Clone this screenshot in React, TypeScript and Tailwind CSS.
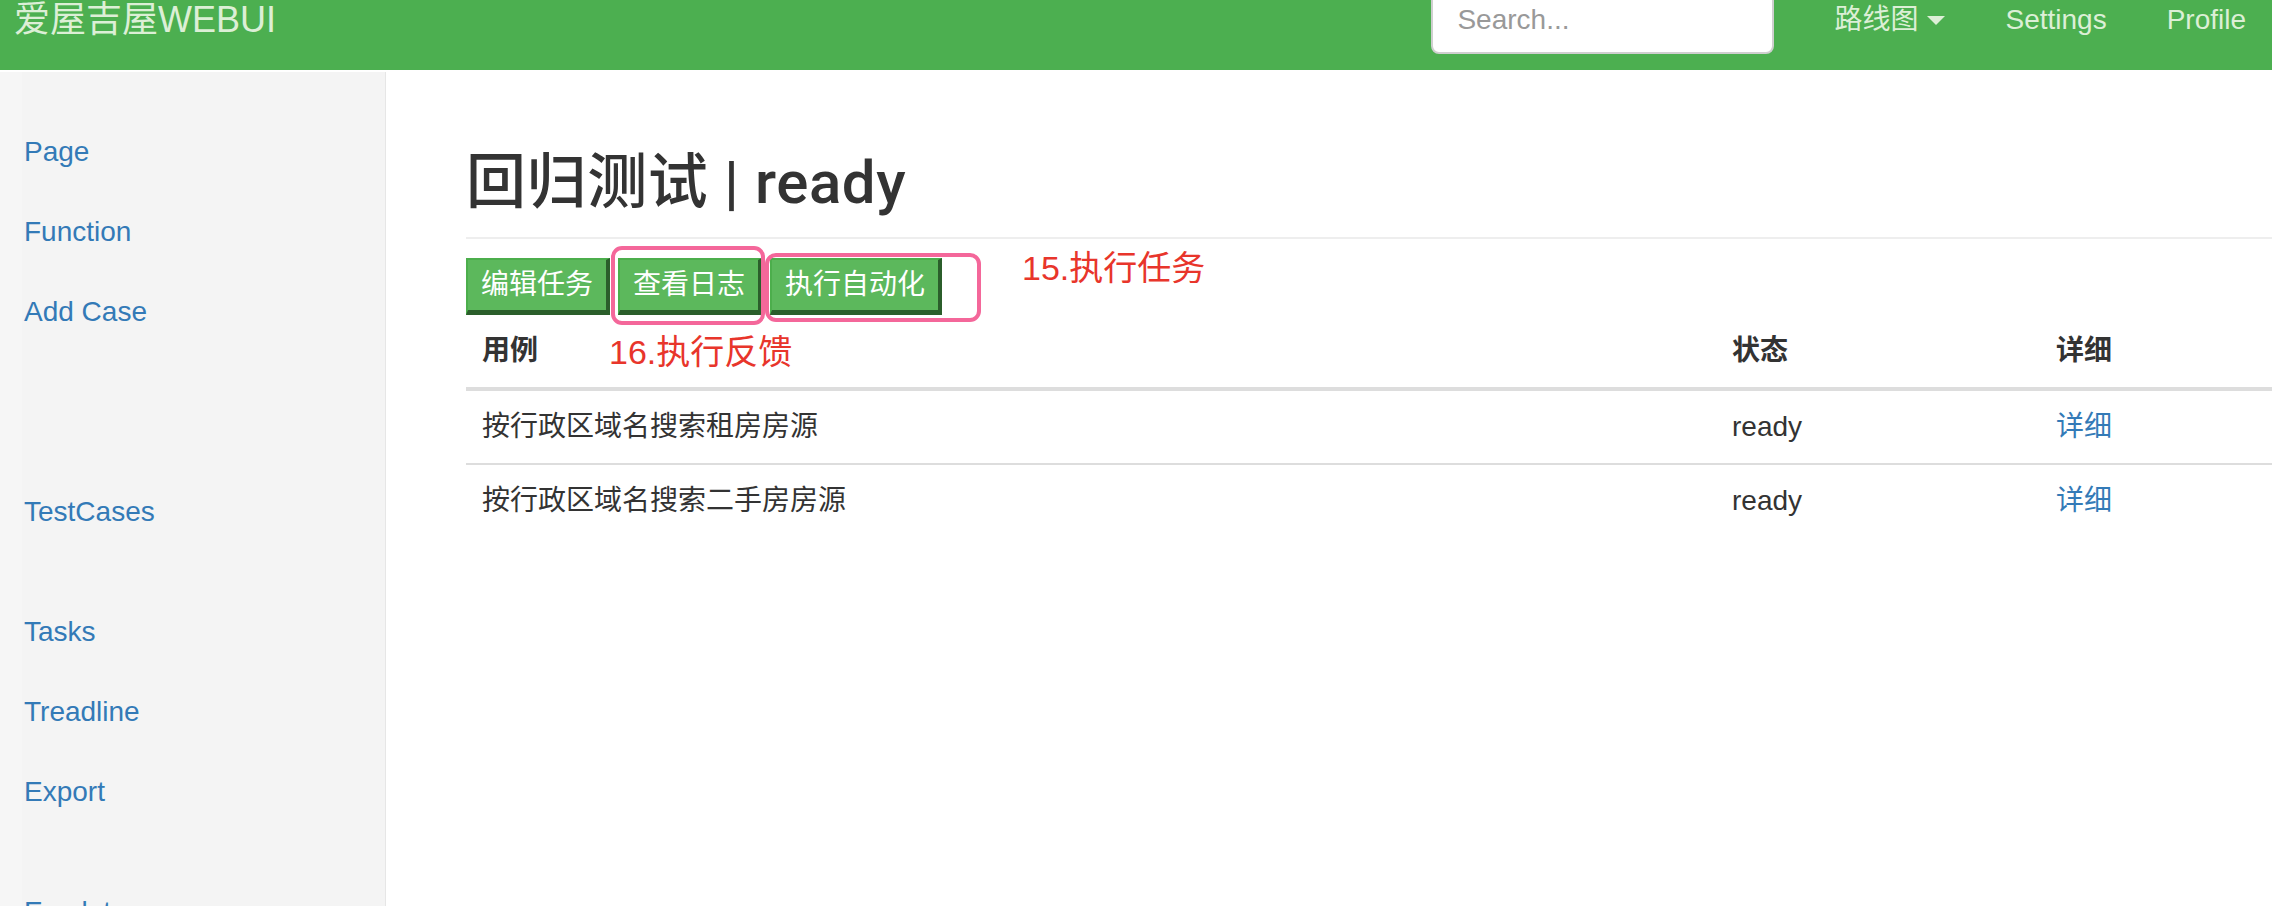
import React from "react";

const FONT = { fontFamily: '"Liberation Sans", "Noto Sans CJK SC", sans-serif' };

function Btn({ children }: { children: React.ReactNode }) {
  return (
    <button className="border-t-2 border-l-2 border-r-4 border-b-[5px] border-t-[#4cae4c] border-l-[#4cae4c] border-r-[#2b5e2b] border-b-[#2b5e2b] bg-[#5cb85c] px-[13px] py-[5px] text-[28px] leading-[40px] text-white">
      {children}
    </button>
  );
}

export default function App() {
  const side: { label: string; mt: string }[] = [
    { label: "Page", mt: "mt-0" },
    { label: "Function", mt: "mt-[40px]" },
    { label: "Add Case", mt: "mt-[40px]" },
    { label: "TestCases", mt: "mt-[160px]" },
    { label: "Tasks", mt: "mt-[80px]" },
    { label: "Treadline", mt: "mt-[40px]" },
    { label: "Export", mt: "mt-[40px]" },
    { label: "Emulator", mt: "mt-[80px]" },
  ];
  const rows = ["按行政区域名搜索租房房源", "按行政区域名搜索二手房房源"];
  return (
    <div style={FONT} className="h-[906px] w-[2272px] overflow-hidden bg-white text-[#333]">
      {/* navbar */}
      <div className="h-[70px] overflow-hidden bg-[#4caf50]">
        <div className="-mt-[30px] flex h-[100px] items-start">
          <div className="pl-[14px] pt-[30px] text-[36px] leading-[40px] text-[#dcefd6]">爱屋吉屋WEBUI</div>
          <div className="ml-auto flex items-start">
            <div className="mt-[16px] flex h-[68px] w-[343px] items-center rounded-[8px] border-2 border-[#cfcfcf] bg-white px-[24px] text-[28px] text-[#999]">
              Search...
            </div>
            <ul className="ml-[30px] flex items-start text-[28px] leading-[40px] text-[#dcefd6]">
              <li className="flex items-center px-[30px] pt-[30px]">
                <span>路线图</span>
                <span className="ml-[9px] inline-block h-0 w-0 border-l-[9px] border-r-[9px] border-t-[9px] border-l-transparent border-r-transparent border-t-[#dcefd6]" />
              </li>
              <li className="px-[30px] pt-[30px]">Settings</li>
              <li className="pl-[30px] pr-[26px] pt-[30px]">Profile</li>
            </ul>
          </div>
        </div>
      </div>

      {/* body */}
      <div className="mt-[2px] flex">
        <aside className="flex h-[834px] w-[386px] overflow-hidden border-r border-[#e6e6e6] bg-[#f4f4f4]">
          <div className="w-[22px] bg-[#f6f6f6]" />
          <nav className="flex flex-col pl-[2px] pt-[60px] text-[28px] leading-[40px] text-[#337ab7]">
            {side.map((s) => (
              <a key={s.label} className={s.mt}>
                {s.label}
              </a>
            ))}
          </nav>
        </aside>

        <main className="relative flex-1 pl-[80px] pt-[78px]">
          <h1 className="border-b-2 border-[#eee] pb-[21px] font-['Roboto','Noto_Sans_CJK_SC',sans-serif] text-[60px] font-medium leading-[66px] tracking-[0.6px] text-[#333]">
            回归测试 | ready
          </h1>
          <div className="mt-[19px] flex gap-[8px]">
            <Btn>编辑任务</Btn>
            <Btn>查看日志</Btn>
            <Btn>执行自动化</Btn>
          </div>

          <div className="text-[28px] leading-[40px]">
            <div className="flex h-[76px] items-center border-b-4 border-[#ddd] font-bold">
              <div className="w-[1250px] px-[16px]">用例</div>
              <div className="w-[324px] px-[16px]">状态</div>
              <div className="flex-1 px-[16px]">详细</div>
            </div>
            {rows.map((r, i) => (
              <div
                key={r}
                className={
                  i === 0
                    ? "flex h-[74px] items-center border-b-2 border-[#ddd]"
                    : "flex h-[72px] items-center"
                }
              >
                <div className="w-[1250px] px-[16px]">{r}</div>
                <div className="w-[324px] px-[16px]">ready</div>
                <div className="flex-1 px-[16px] text-[#337ab7]">详细</div>
              </div>
            ))}
          </div>

          {/* annotations */}
          <div className="absolute left-[225px] top-[174px] h-[79px] w-[154px] rounded-[11px] border-4 border-[#f4679a]" />
          <div className="absolute left-[379px] top-[181px] h-[69px] w-[216px] rounded-[11px] border-4 border-[#f4679a]" />
          <div className="absolute left-[636px] top-[176px] text-[34px] leading-[40px] text-[#e8352b]">15.执行任务</div>
          <div className="absolute left-[223px] top-[260px] text-[34px] leading-[40px] text-[#e8352b]">16.执行反馈</div>
        </main>
      </div>
    </div>
  );
}
